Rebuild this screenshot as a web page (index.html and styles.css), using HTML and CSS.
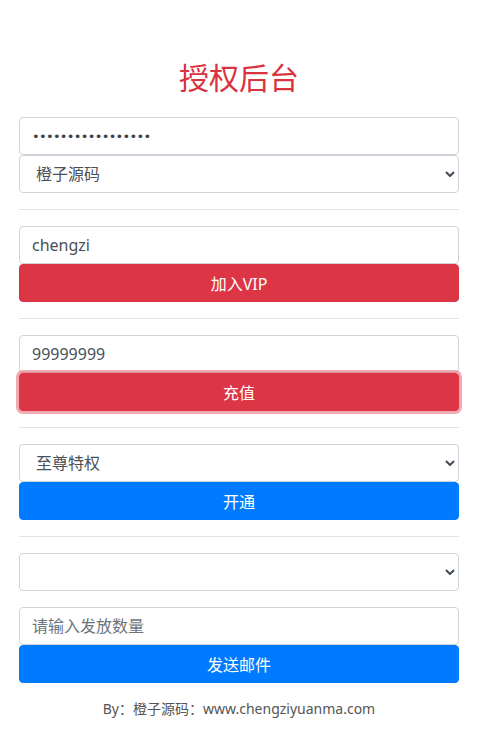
FILE: index.html
```html
<!DOCTYPE html>
<html lang="zh-CN">
<head>
<meta charset="utf-8">
<title>授权后台</title>
<link rel="stylesheet" href="styles.css">
</head>
<body>
<div class="container">
  <h2 class="title">授权后台</h2>
  <div class="group">
    <input class="field password" type="password" value="12345678901234567">
    <select class="field select">
      <option>橙子源码</option>
    </select>
  </div>
  <hr class="divider">
  <div class="group">
    <input class="field" type="text" value="chengzi">
    <button class="btn btn-red">加入VIP</button>
  </div>
  <hr class="divider">
  <div class="group">
    <input class="field" type="text" value="99999999">
    <button class="btn btn-red btn-focus">充值</button>
  </div>
  <hr class="divider">
  <div class="group">
    <select class="field select">
      <option>至尊特权</option>
    </select>
    <button class="btn btn-blue">开通</button>
  </div>
  <hr class="divider">
  <div class="group">
    <select class="field select spaced">
      <option></option>
    </select>
    <input class="field" type="text" placeholder="请输入发放数量">
    <button class="btn btn-blue">发送邮件</button>
  </div>
  <p class="footer">By：橙子源码：www.chengziyuanma.com</p>
</div>
</body>
</html>
```

FILE: styles.css
```css
* { box-sizing: border-box; }

body {
  margin: 0;
  background: #fff;
  font-family: "Noto Sans", "Noto Sans CJK SC", sans-serif;
  color: #495057;
}

.container {
  padding: 57px 31px 0 19px;
}

.title {
  margin: 0 0 22px;
  text-align: center;
  font-size: 30px;
  line-height: 38px;
  font-weight: 400;
  color: #d9333f;
  font-family: "Noto Sans CJK SC", sans-serif;
}

.group {
  display: flex;
  flex-direction: column;
}

.field {
  display: block;
  width: 100%;
  height: 38px;
  margin: 0;
  padding: 0 12px;
  font-family: "Noto Sans", "Noto Sans CJK SC", sans-serif;
  font-size: 16px;
  color: #495057;
  background: #fff;
  border: 1px solid #ced4da;
  border-radius: 4px;
  outline: none;
}

.password {
  font-family: "DejaVu Sans", sans-serif;
  font-size: 13px;
  letter-spacing: -0.7px;
  color: #3f454c;
}

.field::placeholder {
  color: #6c757d;
}

.select {
  -webkit-appearance: none;
  appearance: none;
  padding-left: 16px;
  background-image: url("data:image/svg+xml;utf8,<svg xmlns='http://www.w3.org/2000/svg' width='10' height='6' viewBox='0 0 10 6'><path d='M1 1 L5 5 L9 1' fill='none' stroke='%23444a52' stroke-width='2'/></svg>");
  background-repeat: no-repeat;
  background-position: right 3px center;
  background-size: 10px 6px;
}

.spaced {
  margin-bottom: 16px;
}

.btn {
  display: block;
  width: 100%;
  height: 38px;
  margin: 0;
  padding: 0 12px;
  border: 1px solid transparent;
  border-radius: 4px;
  font-family: "Noto Sans", "Noto Sans CJK SC", sans-serif;
  font-size: 16px;
  color: #fff;
  cursor: pointer;
}

.btn-red {
  background: #dc3545;
  border-color: #dc3545;
}

.btn-blue {
  background: #007bff;
  border-color: #007bff;
}

.btn-focus {
  box-shadow: 0 0 0 3px rgba(225, 83, 97, 0.5);
}

.divider {
  margin: 16px 0;
  border: 0;
  border-top: 1px solid rgba(0, 0, 0, 0.1);
}

.footer {
  margin: 16px 0 0;
  text-align: center;
  font-size: 14px;
  line-height: 20px;
  color: #555;
}
```
